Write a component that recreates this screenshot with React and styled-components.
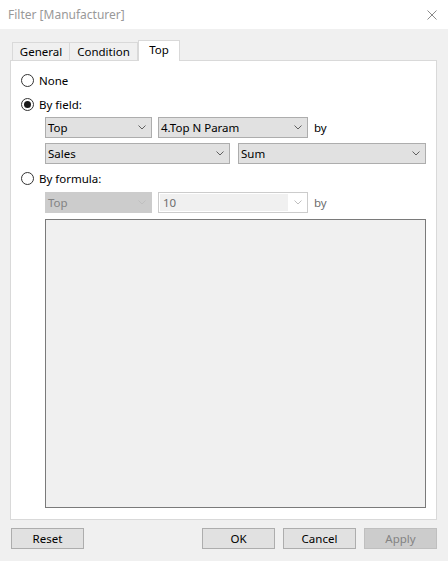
import React from "react";
import styled, { createGlobalStyle } from "styled-components";

const GlobalStyle = createGlobalStyle`
  html, body { margin: 0; padding: 0; background: #f0f0f0; }
  body {
    font-family: "Noto Sans", "Open Sans", "Liberation Sans", sans-serif;
    font-size: 11.5px;
    color: #000;
  }
  * { box-sizing: border-box; }
`;

const Window = styled.div`
  width: 448px;
  height: 561px;
  display: flex;
  flex-direction: column;
  background: #f0f0f0;
`;

const TitleBar = styled.div`
  height: 29px;
  flex: none;
  background: #fff;
  display: flex;
  align-items: center;
  justify-content: space-between;
  padding: 0 11px 0 8px;
  color: #999999;
  font-size: 12px;
`;

const Body = styled.div`
  flex: 1;
  display: flex;
  flex-direction: column;
  padding: 11px 11px 12px 10px;
  min-height: 0;
`;

const TabRow = styled.div`
  display: flex;
  align-items: flex-end;
  height: 20px;
  padding-left: 2px;
  flex: none;
`;

const Tab = styled.div`
  width: ${(p) => p.$w}px;
  height: ${(p) => (p.$active ? 21 : 18)}px;
  margin-bottom: ${(p) => (p.$active ? -1 : 0)}px;
  background: ${(p) => (p.$active ? "#fff" : "#f0f0f0")};
  border: 1px solid #d9d9d9;
  border-bottom: none;
  border-left-width: ${(p) => (p.$first || p.$active ? 1 : 0)}px;
  display: flex;
  align-items: center;
  justify-content: center;
  padding-bottom: ${(p) => (p.$active ? 3 : 0)}px;
  position: relative;
  z-index: ${(p) => (p.$active ? 1 : 0)};
`;

const Panel = styled.div`
  flex: 1;
  min-height: 0;
  background: #fff;
  border: 1px solid #d9d9d9;
  padding: 9px 10px 11px 10px;
  display: flex;
  flex-direction: column;
`;

const RadioRow = styled.label`
  display: flex;
  align-items: center;
  gap: 5px;
  height: 20px;
  margin-top: ${(p) => p.$mt || 0}px;
  flex: none;
`;

const RadioCircle = styled.span`
  width: 13px;
  height: 13px;
  border-radius: 50%;
  border: 1px solid #333;
  background: #fff;
  display: flex;
  align-items: center;
  justify-content: center;
  flex: none;
  &::after {
    content: "";
    width: 7px;
    height: 7px;
    border-radius: 50%;
    background: #1a1a1a;
    display: ${(p) => (p.$checked ? "block" : "none")};
  }
`;

const Indented = styled.div`
  margin-left: 24px;
  margin-top: ${(p) => p.$mt || 0}px;
  display: flex;
  flex-direction: column;
  gap: 5px;
  flex: ${(p) => (p.$grow ? 1 : "none")};
  min-height: 0;
`;

const FieldRow = styled.div`
  display: flex;
  align-items: center;
  height: 21px;
  flex: none;
`;

const Select = styled.div`
  width: ${(p) => (p.$w ? `${p.$w}px` : "auto")};
  flex: ${(p) => (p.$w ? "none" : 1)};
  margin-left: ${(p) => p.$ml || 0}px;
  height: 21px;
  display: flex;
  align-items: center;
  justify-content: space-between;
  padding: 0 5px 0 2px;
  border: 1px solid ${(p) => (p.$disabled ? "#cccccc" : "#adadad")};
  background: ${(p) => (p.$disabled ? "#cccccc" : "#e1e1e1")};
  color: ${(p) => (p.$disabled ? "#838383" : "#000")};
  white-space: nowrap;
`;

const Combo = styled.div`
  width: ${(p) => p.$w}px;
  margin-left: ${(p) => p.$ml || 0}px;
  height: 21px;
  display: flex;
  align-items: center;
  padding: 1px 5px 1px 1px;
  border: 1px solid #cccccc;
  background: #fff;
  gap: 6px;
`;

const ComboInput = styled.div`
  flex: 1;
  height: 100%;
  background: #f0f0f0;
  color: #6d6d6d;
  display: flex;
  align-items: center;
  padding-left: 3px;
`;

const ByText = styled.span`
  margin-left: 6px;
  color: ${(p) => (p.$disabled ? "#6d6d6d" : "#000")};
`;

const FormulaBox = styled.div`
  flex: 1;
  min-height: 0;
  margin-top: 1px;
  border: 1px solid #7a7a7a;
  background: #f0f0f0;
`;

const Footer = styled.div`
  display: flex;
  justify-content: space-between;
  margin-top: 8px;
  padding-left: 1px;
  flex: none;
`;

const ButtonGroup = styled.div`
  display: flex;
  gap: 8px;
`;

const Button = styled.div`
  width: 73px;
  height: 21px;
  display: flex;
  align-items: center;
  justify-content: center;
  border: 1px solid ${(p) => (p.$disabled ? "#bfbfbf" : "#adadad")};
  background: ${(p) => (p.$disabled ? "#cccccc" : "#e1e1e1")};
  color: ${(p) => (p.$disabled ? "#838383" : "#000")};
`;

const Chevron = ({ color = "#606060" }) => (
  <svg width="8" height="5" viewBox="0 0 8 5" style={{ flex: "none" }}>
    <path d="M0.5 0.5 L4 4 L7.5 0.5" fill="none" stroke={color} strokeWidth="1" />
  </svg>
);

const CloseIcon = () => (
  <svg width="10" height="10" viewBox="0 0 10 10">
    <path d="M0.5 0.5 L9.5 9.5 M9.5 0.5 L0.5 9.5" stroke="#8a8a8a" strokeWidth="1" fill="none" />
  </svg>
);

export default function App() {
  return (
    <>
      <GlobalStyle />
      <Window>
        <TitleBar>
          <span>Filter [Manufacturer]</span>
          <CloseIcon />
        </TitleBar>
        <Body>
          <TabRow>
            <Tab $w={58} $first>General</Tab>
            <Tab $w={68}>Condition</Tab>
            <Tab $w={42} $active>Top</Tab>
          </TabRow>
          <Panel>
            <RadioRow>
              <RadioCircle />
              None
            </RadioRow>
            <RadioRow $mt={4}>
              <RadioCircle $checked />
              By field:
            </RadioRow>
            <Indented $mt={3}>
              <FieldRow>
                <Select $w={107}>
                  Top
                  <Chevron />
                </Select>
                <Select $w={150} $ml={6}>
                  4.Top N Param
                  <Chevron />
                </Select>
                <ByText>by</ByText>
              </FieldRow>
              <FieldRow>
                <Select $w={185}>
                  Sales
                  <Chevron />
                </Select>
                <Select $ml={8}>
                  Sum
                  <Chevron />
                </Select>
              </FieldRow>
            </Indented>
            <RadioRow $mt={4}>
              <RadioCircle />
              By formula:
            </RadioRow>
            <Indented $mt={4} $grow>
              <FieldRow>
                <Select $w={107} $disabled>
                  Top
                  <Chevron color="#bfbfbf" />
                </Select>
                <Combo $w={150} $ml={6}>
                  <ComboInput>10</ComboInput>
                  <Chevron color="#bfbfbf" />
                </Combo>
                <ByText $disabled>by</ByText>
              </FieldRow>
              <FormulaBox />
            </Indented>
          </Panel>
          <Footer>
            <Button>Reset</Button>
            <ButtonGroup>
              <Button>OK</Button>
              <Button>Cancel</Button>
              <Button $disabled>Apply</Button>
            </ButtonGroup>
          </Footer>
        </Body>
      </Window>
    </>
  );
}
